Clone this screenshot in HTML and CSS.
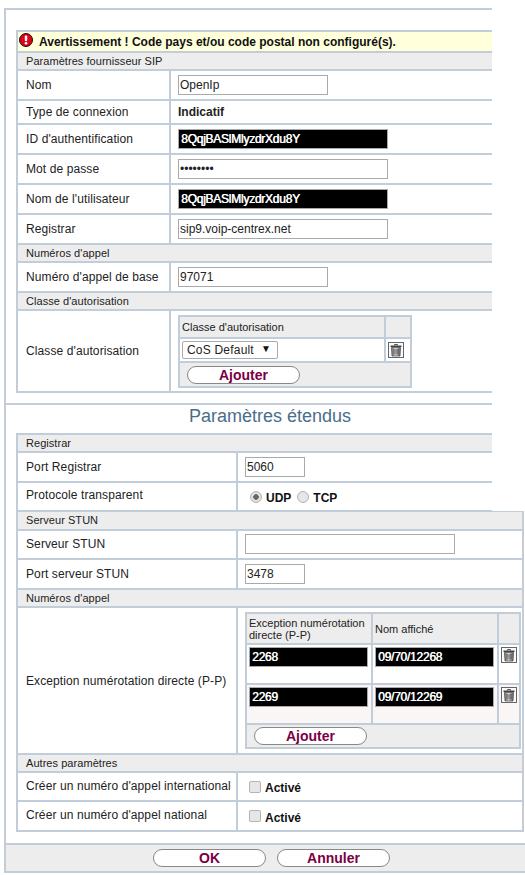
FILE: index.html
```html
<!DOCTYPE html>
<html lang="fr">
<head>
<meta charset="utf-8">
<title>Paramètres fournisseur SIP</title>
<link rel="stylesheet" href="styles.css">
</head>
<body>
<svg class="defs" width="0" height="0" aria-hidden="true">
  <defs>
    <linearGradient id="can" x1="0" x2="1" y1="0" y2="0">
      <stop offset="0" stop-color="#6a6a6a"/>
      <stop offset="0.45" stop-color="#e2e2e2"/>
      <stop offset="1" stop-color="#5c5c5c"/>
    </linearGradient>
    <symbol id="trash" viewBox="0 0 16 16">
      <rect x="0.500" y="0.500" width="15" height="15" fill="#fbfbfb" stroke="#666"/>
      <path d="M6.500 3.500V2.500h3v1" fill="none" stroke="#555"/>
      <rect x="2.500" y="3.500" width="11" height="1.500" fill="#444"/>
      <path d="M3.500 5.500h9l-.5 8.500H4z" fill="url(#can)" stroke="#444" stroke-width=".7"/>
      <path d="M6 7v5.500M8 7v5.500M10 7v5.500" stroke="#333" stroke-width=".8"/>
    </symbol>
  </defs>
</svg>
<div class="frame">
  <section class="panel-a">
    <div class="table narrow">
      <div class="warning">
        <svg class="alert" viewBox="0 0 14 14" aria-hidden="true">
          <circle cx="7" cy="7" r="6.500" fill="#e0001a" stroke="#111" stroke-width="1"/>
          <rect x="5.800" y="2.500" width="2.400" height="5.700" rx="1" fill="#fff"/>
          <circle cx="7" cy="10.300" r="1.300" fill="#fff"/>
        </svg>
        <span>Avertissement ! Code pays et/ou code postal non configuré(s).</span>
      </div>
      <div class="head">Paramètres fournisseur SIP</div>
      <div class="row h30 col-a"><div class="label">Nom</div><div class="value"><input class="field w150" value="OpenIp"></div></div>
      <div class="row h24 col-a"><div class="label">Type de connexion</div><div class="value strong">Indicatif</div></div>
      <div class="row h30 col-a"><div class="label">ID d'authentification</div><div class="value"><input class="field w210 masked" value="8QqjBASlMlyzdrXdu8Y"></div></div>
      <div class="row h30 col-a"><div class="label">Mot de passe</div><div class="value"><input class="field w210" type="password" value="********"></div></div>
      <div class="row h30 col-a"><div class="label">Nom de l'utilisateur</div><div class="value"><input class="field w210 masked" value="8QqjBASlMlyzdrXdu8Y"></div></div>
      <div class="row h30 col-a"><div class="label">Registrar</div><div class="value"><input class="field w210" value="sip9.voip-centrex.net"></div></div>
      <div class="head">Numéros d'appel</div>
      <div class="row h30 col-a"><div class="label">Numéro d'appel de base</div><div class="value"><input class="field w150" value="97071"></div></div>
      <div class="head">Classe d'autorisation</div>
      <div class="row h82 col-a">
        <div class="label">Classe d'autorisation</div>
        <div class="value top">
          <div class="inner inner-a">
            <div class="irow ih-a"><div class="icell ia1 ihead">Classe d'autorisation</div><div class="icell ia2 ihead"></div></div>
            <div class="irow ir-a">
              <div class="icell ia1 white">
                <span class="select-wrap"><select class="select"><option>CoS Default</option></select><span class="arrow">▼</span></span>
              </div>
              <div class="icell ia2 white"><svg class="trash"><use href="#trash"/></svg></div>
            </div>
            <div class="iadd ih-add"><button class="pill" type="button">Ajouter</button></div>
          </div>
        </div>
      </div>
    </div>
  </section>

  <div class="rule"></div>
  <h2 class="title">Paramètres étendus</h2>

  <div class="table narrow">
    <div class="head">Registrar</div>
    <div class="row h30 col-b"><div class="label">Port Registrar</div><div class="value"><input class="field w60" value="5060"></div></div>
    <div class="row h28 col-b thin">
      <div class="label up">Protocole transparent</div>
      <div class="value choice">
        <input class="radio" type="radio" name="proto" checked><span class="opt">UDP</span>
        <input class="radio" type="radio" name="proto"><span class="opt">TCP</span>
      </div>
    </div>
  </div>
  <div class="table wide">
    <div class="head h19">Serveur STUN</div>
    <div class="row h29 col-b"><div class="label lift">Serveur STUN</div><div class="value lift"><input class="field w210"></div></div>
    <div class="row h30 col-b"><div class="label">Port serveur STUN</div><div class="value"><input class="field w60" value="3478"></div></div>
    <div class="head">Numéros d'appel</div>
    <div class="row h147 col-b">
      <div class="label">Exception numérotation directe (P-P)</div>
      <div class="value top">
        <div class="inner inner-b">
          <div class="irow ih-b">
            <div class="icell ib1 ihead">Exception numérotation directe (P-P)</div>
            <div class="icell ib2 ihead">Nom affiché</div>
            <div class="icell ib3 ihead"></div>
          </div>
          <div class="irow ir-b">
            <div class="icell ib1 white pad"><input class="field w119 masked" value="2268"></div>
            <div class="icell ib2 white pad"><input class="field w119 masked" value="09/70/12268"></div>
            <div class="icell ib3 white pad"><svg class="trash"><use href="#trash"/></svg></div>
          </div>
          <div class="irow ir-b">
            <div class="icell ib1 alt pad"><input class="field w119 masked" value="2269"></div>
            <div class="icell ib2 alt pad"><input class="field w119 masked" value="09/70/12269"></div>
            <div class="icell ib3 alt pad"><svg class="trash"><use href="#trash"/></svg></div>
          </div>
          <div class="iadd ih-add2"><button class="pill" type="button">Ajouter</button></div>
        </div>
      </div>
    </div>
    <div class="head">Autres paramètres</div>
    <div class="row h29 col-b">
      <div class="label lift">Créer un numéro d'appel international</div>
      <div class="value choice"><input class="check" type="checkbox"><span class="opt">Activé</span></div>
    </div>
    <div class="row h30 col-b">
      <div class="label lift">Créer un numéro d'appel national</div>
      <div class="value choice"><input class="check" type="checkbox"><span class="opt">Activé</span></div>
    </div>
  </div>

  <footer class="footer">
    <button class="pill" type="button">OK</button>
    <button class="pill" type="button">Annuler</button>
  </footer>
</div>
</body>
</html>
```
FILE: styles.css
```css
* { box-sizing: border-box; }
html, body { margin: 0; padding: 0; background: #fff; }
body {
  padding: 8px 0 0 4px;
  width: 525px;
  overflow-x: hidden;
  font: 12px/14px "Liberation Sans", Arial, sans-serif;
  color: #222;
}
.defs { position: absolute; }
.frame { width: 521px; border-left: 2px solid #c1cdd9; }
.panel-a { width: 486px; border-top: 2px solid #c1cdd9; padding: 20px 0 10px 0; }
.rule { width: 486px; height: 2px; background: #c1cdd9; }
.title {
  margin: 0 0 0 10px;
  width: 508px;
  height: 28px;
  font-weight: normal;
  font-size: 18px;
  line-height: 22px;
  text-align: center;
  color: #4a6d8c;
}
.table { margin-left: 10px; border-left: 2px solid #c1cdd9; }
.narrow { width: 476px; border-top: 2px solid #c1cdd9; }
.wide { width: 508px; border-top: 1px solid #c1cdd9; border-right: 2px solid #c1cdd9; }

.warning {
  height: 21px;
  display: flex;
  align-items: center;
  gap: 6px;
  padding-left: 1px;
  background: #ffffdc;
  border-bottom: 2px solid #c1cdd9;
  font-weight: bold;
  color: #111;
}
.alert { width: 14px; height: 14px; margin-top: -3px; }

.head {
  height: 18px;
  padding-left: 8px;
  background: #ededed;
  border-bottom: 2px solid #c1cdd9;
  font-size: 11px;
  line-height: 16px;
  letter-spacing: .05px;
}
.h19 { height: 19px; line-height: 17px; }

.row { display: flex; border-bottom: 2px solid #c1cdd9; }
.thin { border-bottom-width: 1px; }
.h24 { height: 24px; }
.h28 { height: 28px; }
.h29 { height: 29px; }
.h30 { height: 30px; }
.h82 { height: 82px; }
.h147 { height: 147px; }

.label {
  display: flex;
  align-items: center;
  padding-left: 8px;
  border-right: 2px solid #c1cdd9;
  letter-spacing: .1px;
  white-space: nowrap;
}
.col-a .label { width: 153px; flex: none; }
.col-b .label { width: 220px; flex: none; }
.up { padding-bottom: 3px; }
.lift { padding-bottom: 2px; }
.value { display: flex; align-items: center; padding-left: 7px; flex: 1; min-width: 0; }
.top { align-items: flex-start; padding-top: 4px; }
.strong { font-weight: bold; }

.field {
  display: block;
  height: 20px;
  padding: 0 1px;
  border: 1px solid #aaa;
  background: #fff;
  font: 12px "Liberation Sans", Arial, sans-serif;
  color: #222;
  border-radius: 0;
  outline: none;
}
.w60 { width: 60px; }
.w119 { width: 119px; }
.w150 { width: 150px; }
.w210 { width: 210px; }
.masked {
  background: #000;
  color: #fff;
  padding-left: 2px;
  text-shadow: .5px 0 0 #fff;
  letter-spacing: -.25px;
}

.choice { padding-top: 3px; }
.opt { font-weight: bold; color: #111; }
.radio {
  appearance: none;
  margin: -3px 4px 0 5px;
  width: 12px;
  height: 12px;
  border-radius: 50%;
  border: 1px solid #b4b4b4;
  background: #e6e6e6;
}
.radio:checked { background: radial-gradient(circle, #666 0 2.500px, #e0e0e0 3px); }
.radio + .opt + .radio { margin-left: 6px; }
.check {
  appearance: none;
  margin: -3px 4px 0 4px;
  width: 12px;
  height: 12px;
  border-radius: 2px;
  border: 1px solid #b4b4b4;
  background: #e6e6e6;
}

.inner { border: 2px solid #c1cdd9; font-size: 11px; line-height: 12px; }
.inner-a { width: 234px; }
.inner-b { width: 276px; }
.irow { display: flex; border-bottom: 2px solid #c1cdd9; }
.ih-a { height: 22px; }
.ir-a { height: 24px; }
.ih-b { height: 31px; }
.ir-b { height: 40px; }
.icell { display: flex; align-items: center; padding-left: 2px; }
.ihead { background: #ededed; }
.white { background: #fff; }
.alt { background: #faf6f5; }
.pad { align-items: flex-start; padding-top: 2px; }
.ia1 { width: 206px; border-right: 2px solid #c1cdd9; }
.ia2 { flex: 1; }
.ib1 { width: 126px; border-right: 2px solid #c1cdd9; }
.ib2 { width: 126px; border-right: 2px solid #c1cdd9; }
.ib3 { flex: 1; }
.iadd { display: flex; align-items: center; padding-left: 7px; background: #ededed; }
.ih-add { height: 23px; }
.ih-add2 { height: 22px; }
.trash { display: block; width: 16px; height: 16px; }

.select-wrap { position: relative; display: block; width: 96px; height: 18px; }
.select {
  appearance: none;
  display: block;
  width: 96px;
  height: 18px;
  padding: 0 0 0 4px;
  border: 1px solid #aaa;
  border-radius: 2px;
  background: #fff;
  font: 12px "Liberation Sans", Arial, sans-serif;
  letter-spacing: .2px;
  color: #222;
}
.arrow { position: absolute; right: 7px; top: 2px; font-size: 10px; color: #111; pointer-events: none; }

.pill {
  display: block;
  width: 113px;
  height: 18px;
  padding: 0;
  border: 1px solid #888;
  border-radius: 9px;
  background: #fff;
  font: bold 14px/14px "Liberation Sans", Arial, sans-serif;
  color: #7a0044;
}
.footer {
  width: 519px;
  height: 30px;
  margin-top: 11px;
  padding-left: 12px;
  display: flex;
  align-items: center;
  justify-content: center;
  gap: 11px;
  background: #ededed;
  border-top: 2px solid #c1cdd9;
  border-bottom: 2px solid #c1cdd9;
}
```
